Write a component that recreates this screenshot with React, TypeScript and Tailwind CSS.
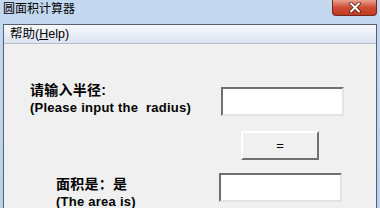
import React from 'react';

const font = { fontFamily: '"Liberation Sans", "Noto Sans CJK SC", sans-serif' };

const Sunken: React.FC<{ className?: string }> = ({ className }) => (
    <div className={`h-[29px] w-[123px] bg-white border-2 border-t-[#6f6f6f] border-l-[#6f6f6f] border-b-[#e3e3e3] border-r-[#e3e3e3] ${className ?? ''}`} />
);

export default function App() {
    return (
        <div className="w-[380px] h-[208px] overflow-hidden flex flex-col bg-gradient-to-b from-[#c4d8f0] to-[#b9d1ee]" style={font}>
            {/* title bar */}
            <div className="h-[24px] flex items-start shrink-0">
                <span className="ml-[3px] mt-[3px] text-[12px] leading-[12px] text-black">圆面积计算器</span>
                <div className="ml-auto mr-[3px] w-[45px] h-[16px] rounded-b-[4px] border border-t-0 border-[#6e2a1f] bg-gradient-to-b from-[#e8a18f] via-[#cf4b33] to-[#c03a25] flex items-center justify-center">
                    <svg width="14" height="11" viewBox="0 0 14 11">
                        <path d="M3 1.5 L11 9.5 M11 1.5 L3 9.5" stroke="#5a1a10" strokeWidth="3.6" strokeLinecap="round" />
                        <path d="M3 1.5 L11 9.5 M11 1.5 L3 9.5" stroke="#ffffff" strokeWidth="2" strokeLinecap="round" />
                    </svg>
                </div>
            </div>

            {/* client */}
            <div className="flex-1 mx-[3px] border-x border-t border-[#56606e] bg-[#f0f0f0] flex flex-col">
                <div className="h-[19px] shrink-0 border-b border-[#b6bccc] bg-gradient-to-b from-[#f8f9fc] to-[#dde3f2] flex items-center">
                    <span className="ml-[6px] text-[12.5px] leading-[13px] text-black">帮助(<span className="underline">H</span>elp)</span>
                </div>

                <div className="flex mt-[43px]">
                    <div className="ml-[26px] w-[191px] -mt-[5px] font-bold text-[13px] leading-[17px] tracking-[0.25px] text-black">
                        <div className="text-[14px]">请输入半径:</div>
                        <div className="whitespace-pre">(Please input the  radius)</div>
                    </div>
                    <Sunken />
                </div>

                <div className="flex mt-[15px]">
                    <div className="ml-[237px] w-[78px] h-[29px] bg-[#f0f0f0] border-2 border-t-[#ffffff] border-l-[#ffffff] border-b-[#6f6f6f] border-r-[#6f6f6f] flex items-center justify-center text-[13px] text-black">
                        =
                    </div>
                </div>

                <div className="flex mt-[13px]">
                    <div className="ml-[52px] w-[163px] mt-[3px] font-bold text-[13px] leading-[17px] tracking-[0.25px] text-black">
                        <div className="text-[14px]">面积是：是</div>
                        <div>(The area is)</div>
                    </div>
                    <Sunken />
                </div>
            </div>
        </div>
    );
}
